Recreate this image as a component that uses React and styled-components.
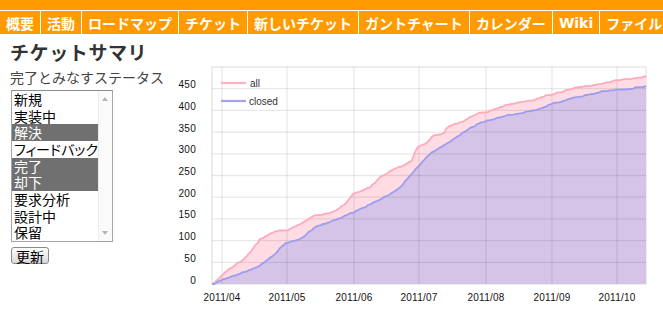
import React from "react";
import styled, { createGlobalStyle } from "styled-components";

const Global = createGlobalStyle`
  html, body {
    margin: 0;
    padding: 0;
    background: #fff;
    overflow: hidden;
    font-family: "Noto Sans CJK JP", "Noto Sans", sans-serif;
  }
`;

const TopBand = styled.div`
  height: 10px;
  background: #ff9a00;
  border-bottom: 1px solid #fff;
`;

const Menu = styled.div`
  display: flex;
  height: 23px;
  white-space: nowrap;
`;

const Tab = styled.div`
  display: flex;
  align-items: center;
  flex-shrink: 0;
  padding: 0 6px;
  background: #ff9a00;
  color: #fff;
  font-family: "DejaVu Sans", "Noto Sans CJK JP", sans-serif;
  font-weight: bold;
  font-size: 14px;
  border-right: 1px solid #fff;
`;

const Content = styled.div`
  display: flex;
  align-items: flex-start;
  padding-top: 7px;
`;

const Side = styled.div`
  width: 160px;
  padding-left: 10px;
  flex-shrink: 0;
`;

const Title = styled.h2`
  margin: 0;
  font-size: 19px;
  line-height: 22px;
  letter-spacing: 0.6px;
  font-weight: bold;
  color: #333;
`;

const Label = styled.div`
  margin-top: 5px;
  font-size: 14px;
  line-height: 18px;
  color: #444;
`;

const ListBox = styled.div`
  display: flex;
  width: 100px;
  height: 150px;
  margin-top: 4px;
  margin-left: 1px;
  border: 1px solid #a6a6a6;
  border-top-color: #8c8c8c;
`;

const Options = styled.div`
  flex: 1;
  display: flex;
  flex-direction: column;
`;

const Option = styled.div`
  height: 16.67px;
  line-height: 16.67px;
  padding-left: 2px;
  font-size: 14px;
  white-space: nowrap;
  font-feature-settings: "palt";
  color: ${(p) => (p.selected ? "#fff" : "#000")};
  background: ${(p) => (p.selected ? "#707070" : "transparent")};
`;

const Scrollbar = styled.div`
  width: 15px;
  display: flex;
  flex-direction: column;
  justify-content: space-between;
  align-items: center;
  padding: 6px 0;
  box-sizing: border-box;
  background: #fafafa;
  border-left: 1px solid #ececec;
`;

const Arrow = styled.div`
  width: 0;
  height: 0;
  border-left: 3px solid transparent;
  border-right: 3px solid transparent;
  ${(p) =>
    p.down
      ? "border-top: 4px solid #b5b5b5;"
      : "border-bottom: 4px solid #b5b5b5;"}
`;

const Button = styled.button`
  display: block;
  margin: 5px 0 0 1px;
  height: 17px;
  padding: 0 4px;
  font-family: "Noto Sans CJK JP", sans-serif;
  font-size: 14px;
  line-height: 14px;
  color: #000;
  border: 1px solid #8a8a8a;
  border-radius: 3px;
  background: linear-gradient(#ffffff, #d9d9d9);
`;

const ChartSvg = styled.svg`
  display: block;
  margin-top: 19px;
  flex-shrink: 0;
  font-family: "Liberation Sans", Arial, sans-serif;
`;

const tabs = [
  "概要",
  "活動",
  "ロードマップ",
  "チケット",
  "新しいチケット",
  "ガントチャート",
  "カレンダー",
  "Wiki",
  "ファイル",
];

const statuses = [
  ["新規", false],
  ["実装中", false],
  ["解決", true],
  ["フィードバック", false],
  ["完了", true],
  ["却下", true],
  ["要求分析", false],
  ["設計中", false],
  ["保留", false],
];

const allPts = [
  [212, 0], [216, 8], [222, 20], [230, 37], [245, 60], [252, 80], [260, 104],
  [275, 123], [287, 124], [300, 140], [315, 159], [333, 167], [345, 186],
  [354, 210], [370, 224], [380, 247], [393, 265], [405, 275], [412, 286],
  [417, 316], [428, 328], [432, 342], [443, 347], [448, 364], [465, 378],
  [478, 395], [486, 397], [505, 412], [520, 420], [533, 424], [545, 435],
  [560, 443], [575, 453], [600, 462], [617, 471], [640, 476], [646, 479],
];

const closedPts = [
  [212, 0], [216, 3], [222, 12], [240, 25], [260, 44], [275, 71], [285, 95],
  [300, 104], [315, 132], [333, 147], [354, 167], [375, 190], [388, 205],
  [400, 224], [412, 256], [419, 274], [430, 302], [440, 316], [452, 332],
  [465, 353], [478, 370], [490, 379], [505, 389], [520, 395], [540, 405],
  [552, 416], [570, 428], [590, 438], [608, 447], [630, 451], [646, 457],
];

const X0 = 212;
const X1 = 646;
const Y0 = 284;
const Y1 = 67;
const toY = (v) => Y0 - v * 0.434;

const interp = (pts, x) => {
  for (let i = 1; i < pts.length; i++) {
    if (x <= pts[i][0]) {
      const [xa, va] = pts[i - 1];
      const [xb, vb] = pts[i];
      return va + ((x - xa) / (xb - xa)) * (vb - va);
    }
  }
  return pts[pts.length - 1][1];
};

const noise = (i, seed) => {
  const s = Math.sin(i * 12.9898 + seed) * 43758.5453;
  return s - Math.floor(s);
};

// daily cumulative counts drawn as a gentle staircase
const linePath = (pts, seed) => {
  const days = 200;
  const dx = (X1 - X0) / days;
  let prev = 0;
  let d = `M${X0},${toY(0).toFixed(1)}`;
  for (let i = 1; i <= days; i++) {
    const x = X0 + i * dx;
    const target = interp(pts, x);
    const v = i === days ? target : Math.max(prev, target - noise(i, seed) * 2.5);
    d += ` L${x.toFixed(1)},${toY(v).toFixed(1)}`;
    prev = v;
  }
  return d;
};

const allLine = linePath(allPts, 1.3);
const closedLine = linePath(closedPts, 7.7);
const close = ` V${Y0} H${X0} Z`;

const months = [
  [222, "2011/04"],
  [287, "2011/05"],
  [354, "2011/06"],
  [419, "2011/07"],
  [486, "2011/08"],
  [552, "2011/09"],
  [617, "2011/10"],
];

const yTicks = [0, 50, 100, 150, 200, 250, 300, 350, 400, 450];

const Chart = () => (
  <ChartSvg width="493" height="250" viewBox="170 60 493 250">
    <rect x={X0} y={Y1} width={X1 - X0} height={Y0 - Y1} fill="#fff" stroke="#dcdcdc" />
    <path d={allLine + close} fill="#ffdbe3" />
    <path d={closedLine + close} fill="#d5c4e8" />
    {yTicks.slice(1).map((v) => (
      <line key={v} x1={X0} x2={X1} y1={toY(v)} y2={toY(v)} stroke="rgba(0,0,0,0.09)" strokeWidth="1.3" />
    ))}
    {months.map(([x]) => (
      <line key={x} x1={x} x2={x} y1={Y1} y2={Y0} stroke="rgba(0,0,0,0.09)" strokeWidth="1.3" />
    ))}
    <path d={allLine} fill="none" stroke="#ffaabb" strokeWidth="1.8" strokeLinejoin="round" />
    <path d={closedLine} fill="none" stroke="#9d9df0" strokeWidth="1.8" strokeLinejoin="round" />
    <line x1={221} x2={246} y1={83} y2={83} stroke="#ffb1c0" strokeWidth="2.2" />
    <text x={250} y={86.5} fontSize="10" fill="#333">all</text>
    <line x1={221} x2={246} y1={101} y2={101} stroke="#a3a3ee" strokeWidth="2.2" />
    <text x={249} y={104.5} fontSize="10" fill="#333">closed</text>
    {yTicks.map((v) => (
      <text key={v} x={196} y={toY(v) - 0.5} fontSize="10" fill="#111" textAnchor="end" letterSpacing="0.3">
        {v}
      </text>
    ))}
    {months.map(([x, t]) => (
      <text key={t} x={x} y={300.5} fontSize="10" fill="#111" textAnchor="middle" letterSpacing="0.2">
        {t}
      </text>
    ))}
  </ChartSvg>
);

export default function App() {
  return (
    <>
      <Global />
      <TopBand />
      <Menu>
        {tabs.map((t) => (
          <Tab key={t}>{t}</Tab>
        ))}
      </Menu>
      <Content>
        <Side>
          <Title>チケットサマリ</Title>
          <Label>完了とみなすステータス</Label>
          <ListBox>
            <Options>
              {statuses.map(([name, sel]) => (
                <Option key={name} selected={sel}>
                  {name}
                </Option>
              ))}
            </Options>
            <Scrollbar>
              <Arrow />
              <Arrow down />
            </Scrollbar>
          </ListBox>
          <Button>更新</Button>
        </Side>
        <Chart />
      </Content>
    </>
  );
}
